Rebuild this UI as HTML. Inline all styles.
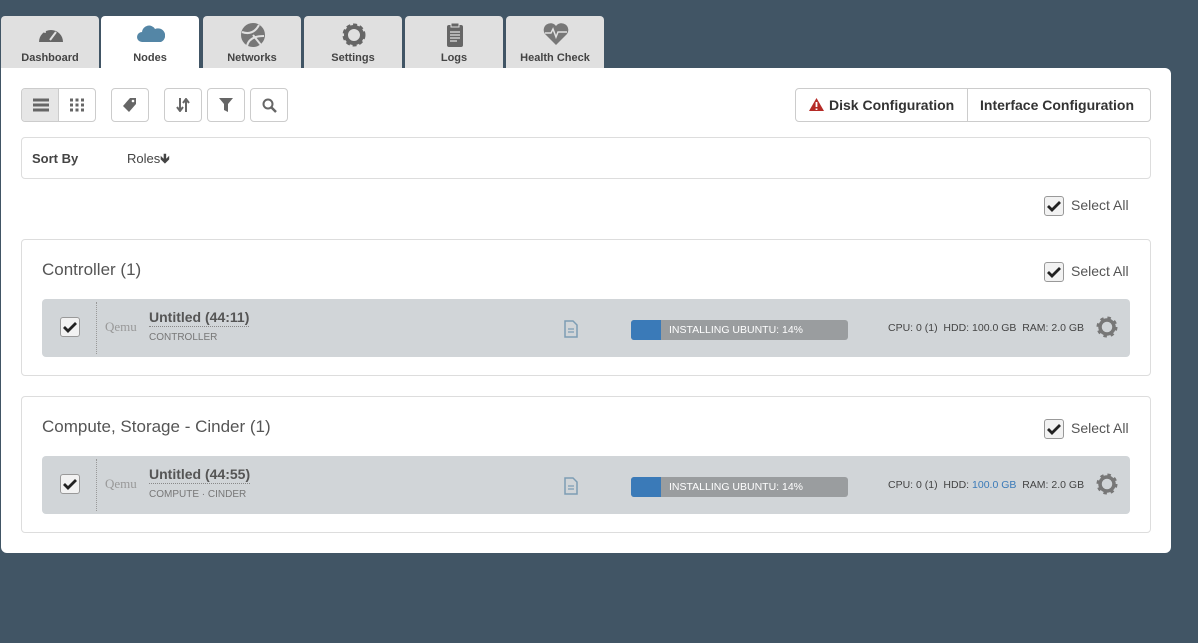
<!DOCTYPE html>
<html><head><meta charset="utf-8"><style>
*{box-sizing:border-box;margin:0;padding:0}
body{width:1198px;height:643px;background:#415565;font-family:"Liberation Sans",sans-serif;color:#333;position:relative;overflow:hidden}
.a{position:absolute}
.tab{position:absolute;top:16px;height:52px;width:98px;background:#e0e0e0;border-radius:4px 4px 0 0;font-size:11px;font-weight:bold;color:#444;text-align:center}
.tab span{position:absolute;left:0;right:0;top:36px}
.tab svg{position:absolute;left:36px;top:6px}
.panel{left:1px;top:68px;width:1170px;height:485px;background:#fff;border-radius:0 6px 6px 6px}
.btn{position:absolute;top:88px;height:34px;border:1px solid #ccc;border-radius:4px;background:#fff}
.box{position:absolute;border:1px solid #ddd;border-radius:4px;background:#fff}
.cb{position:absolute;width:20px;height:20px;border:1px solid #999;border-radius:3px;background:#f2f2f2}
.sel{position:absolute;font-size:14px;color:#555}
.node{position:absolute;left:42px;width:1088px;height:58px;background:#d1d5d8;border-radius:4px}
.node .dot{position:absolute;left:54px;top:3px;height:52px;border-left:1px dotted #999}
.node .qemu{position:absolute;left:63px;top:20px;font-family:"Liberation Serif",serif;font-size:13px;color:#999}
.node .nm{position:absolute;left:107px;top:10px;font-size:14px;font-weight:bold;color:#555;border-bottom:1px dotted #888;line-height:17px}
.node .role{position:absolute;left:107px;top:33px;font-size:10px;color:#777}
.node .pb{position:absolute;left:589px;top:21px;width:217px;height:20px;background:#9a9d9f;border-radius:3px;overflow:hidden;color:#fff;font-size:10.5px;line-height:20px;padding-left:38px}
.node .pb i{position:absolute;left:0;top:0;width:30px;height:20px;background:#3a7ab8}
.node .info{position:absolute;left:846px;top:23px;font-size:10.5px;color:#444}
</style></head><body>
<div class="tab" style="left:1px"><svg width="28" height="24" viewBox="0 0 28 24"><path d="M2 20A12 12 0 1 1 26 20Z" fill="#666"/><path d="M13 18L19 10" stroke="#e0e0e0" stroke-width="2"/><circle cx="8" cy="10" r="1" fill="#e0e0e0"/><circle cx="14" cy="7" r="1" fill="#e0e0e0"/><circle cx="20" cy="8" r="1" fill="#e0e0e0"/></svg><span>Dashboard</span></div>
<div class="tab" style="left:101px;background:#fff;height:53px"><svg width="28" height="24" viewBox="0 0 28 24"><path d="M5 20a5 5 0 0 1 0-10a7 7 0 0 1 13-3a6 6 0 0 1 6 13Z" fill="#5486a6"/></svg><span>Nodes</span></div>
<div class="tab" style="left:203px"><svg width="28" height="26" viewBox="0 0 28 26"><circle cx="14" cy="13" r="12" fill="#777"/><path d="M3 10Q14 14 20 3M8 24Q10 14 25 14M14 13L22 23" stroke="#e0e0e0" stroke-width="2" fill="none"/></svg><span>Networks</span></div>
<div class="tab" style="left:304px"><svg width="28" height="26" viewBox="0 0 28 26"><circle cx="14" cy="13" r="9" fill="none" stroke="#666" stroke-width="5" stroke-dasharray="3.5 2.4"/><circle cx="14" cy="13" r="8" fill="none" stroke="#666" stroke-width="4"/></svg><span>Settings</span></div>
<div class="tab" style="left:405px"><svg width="28" height="26" viewBox="0 0 28 26"><rect x="6" y="3" width="16" height="22" rx="2" fill="#666"/><rect x="10" y="1" width="8" height="4" fill="#666" stroke="#e0e0e0"/><path d="M9 10h10M9 13h10M9 16h10M9 19h7" stroke="#e0e0e0" stroke-width="1.3"/></svg><span>Logs</span></div>
<div class="tab" style="left:506px"><svg width="28" height="24" viewBox="0 0 28 24"><path d="M14 23L3 12A6 6 0 0 1 14 4A6 6 0 0 1 25 12Z" fill="#777"/><path d="M3 11h6l2-4 3 8 2-5h9" stroke="#e0e0e0" stroke-width="1.5" fill="none"/></svg><span>Health Check</span></div>
<div class="a panel"></div>
<div class="btn" style="left:21px;width:75px;overflow:hidden"><div class="a" style="left:0;top:0;width:37px;height:32px;background:#e6e6e6;border-right:1px solid #ccc"></div>
<svg class="a" style="left:11px;top:9px" width="16" height="14"><path d="M0 2h16M0 7h16M0 12h16" stroke="#666" stroke-width="3"/></svg>
<svg class="a" style="left:47px;top:9px" width="16" height="14"><path d="M1 2h3M6.5 2h3M12 2h3M1 7h3M6.5 7h3M12 7h3M1 12h3M6.5 12h3M12 12h3" stroke="#666" stroke-width="3"/></svg></div>
<div class="btn" style="left:111px;width:38px"><svg class="a" style="left:10px;top:8px" width="16" height="16"><path d="M8 1h6v6l-7 8-6-6Z" fill="#666"/><circle cx="11" cy="4" r="1.3" fill="#fff"/></svg></div>
<div class="btn" style="left:164px;width:38px"><svg class="a" style="left:11px;top:9px" width="14" height="14"><path d="M4 0v12M1 9l3 4 3-4M10 14V2M7 5l3-4 3 4" stroke="#666" stroke-width="2" fill="none"/></svg></div>
<div class="btn" style="left:207px;width:38px"><svg class="a" style="left:11px;top:9px" width="14" height="14"><path d="M0 0h14L9 6v8L5 12V6Z" fill="#666"/></svg></div>
<div class="btn" style="left:250px;width:38px"><svg class="a" style="left:11px;top:9px" width="15" height="15"><circle cx="6" cy="6" r="4.5" stroke="#666" stroke-width="2" fill="none"/><path d="M9 9l5 5" stroke="#666" stroke-width="2.5"/></svg></div>
<div class="btn" style="left:795px;width:356px;font-size:14px;font-weight:bold;color:#333;line-height:32px"><div class="a" style="left:171px;top:0;height:32px;border-left:1px solid #ccc"></div>
<svg class="a" style="left:13px;top:9px" width="15" height="13"><path d="M7.5 0L15 13H0Z" fill="#b52b27"/><path d="M7.5 4v5M7.5 10.5v1.5" stroke="#fff" stroke-width="1.8"/></svg>
<span class="a" style="left:33px">Disk Configuration</span><span class="a" style="left:184px">Interface Configuration</span></div>
<div class="box" style="left:21px;top:137px;width:1130px;height:42px"><span class="a" style="left:10px;top:13px;font-size:13px;font-weight:bold;color:#444">Sort By</span><span class="a" style="left:105px;top:12px;font-size:13px;color:#444">Roles<b style="font-size:13px">🡻</b></span></div>
<div class="cb" style="left:1044px;top:196px"><svg width="18" height="18"><path d="M3 9l4 4 8-8" stroke="#222" stroke-width="2.8" fill="none"/></svg></div><span class="sel" style="left:1071px;top:197px">Select All</span>
<div class="box" style="left:21px;top:239px;width:1130px;height:137px"></div>
<span class="a" style="left:42px;top:260px;font-size:17px;color:#555">Controller (1)</span>
<div class="cb" style="left:1044px;top:262px"><svg width="18" height="18"><path d="M3 9l4 4 8-8" stroke="#222" stroke-width="2.8" fill="none"/></svg></div><span class="sel" style="left:1071px;top:263px">Select All</span>
<div class="node" style="top:299px"><div class="cb" style="left:18px;top:18px"><svg width="18" height="18"><path d="M3 9l4 4 8-8" stroke="#222" stroke-width="2.8" fill="none"/></svg></div><div class="dot"></div><span class="qemu">Qemu</span><span class="nm">Untitled (44:11)</span><span class="role">CONTROLLER</span>
<svg class="a" style="left:522px;top:21px" width="14" height="18"><path d="M1 1h8l4 4v12H1Z" fill="none" stroke="#7d9db4" stroke-width="1.5"/><path d="M4 9h6M4 12h6" stroke="#7d9db4" stroke-width="1.3"/></svg>
<div class="pb"><i></i>INSTALLING UBUNTU: 14%</div><span class="info">CPU: 0 (1)&nbsp; HDD: 100.0 GB&nbsp; RAM: 2.0 GB</span>
<svg class="a" style="left:1053px;top:16px" width="24" height="24"><circle cx="12" cy="12" r="8" fill="none" stroke="#777" stroke-width="5" stroke-dasharray="3 3.3"/><circle cx="12" cy="12" r="7" fill="none" stroke="#777" stroke-width="3.5"/></svg></div>
<div class="box" style="left:21px;top:396px;width:1130px;height:137px"></div>
<span class="a" style="left:42px;top:417px;font-size:17px;color:#555">Compute, Storage - Cinder (1)</span>
<div class="cb" style="left:1044px;top:419px"><svg width="18" height="18"><path d="M3 9l4 4 8-8" stroke="#222" stroke-width="2.8" fill="none"/></svg></div><span class="sel" style="left:1071px;top:420px">Select All</span>
<div class="node" style="top:456px"><div class="cb" style="left:18px;top:18px"><svg width="18" height="18"><path d="M3 9l4 4 8-8" stroke="#222" stroke-width="2.8" fill="none"/></svg></div><div class="dot"></div><span class="qemu">Qemu</span><span class="nm">Untitled (44:55)</span><span class="role">COMPUTE · CINDER</span>
<svg class="a" style="left:522px;top:21px" width="14" height="18"><path d="M1 1h8l4 4v12H1Z" fill="none" stroke="#7d9db4" stroke-width="1.5"/><path d="M4 9h6M4 12h6" stroke="#7d9db4" stroke-width="1.3"/></svg>
<div class="pb"><i></i>INSTALLING UBUNTU: 14%</div><span class="info">CPU: 0 (1)&nbsp; HDD: <span style="color:#3a7ab8">100.0 GB</span>&nbsp; RAM: 2.0 GB</span>
<svg class="a" style="left:1053px;top:16px" width="24" height="24"><circle cx="12" cy="12" r="8" fill="none" stroke="#777" stroke-width="5" stroke-dasharray="3 3.3"/><circle cx="12" cy="12" r="7" fill="none" stroke="#777" stroke-width="3.5"/></svg></div>
</body></html>
